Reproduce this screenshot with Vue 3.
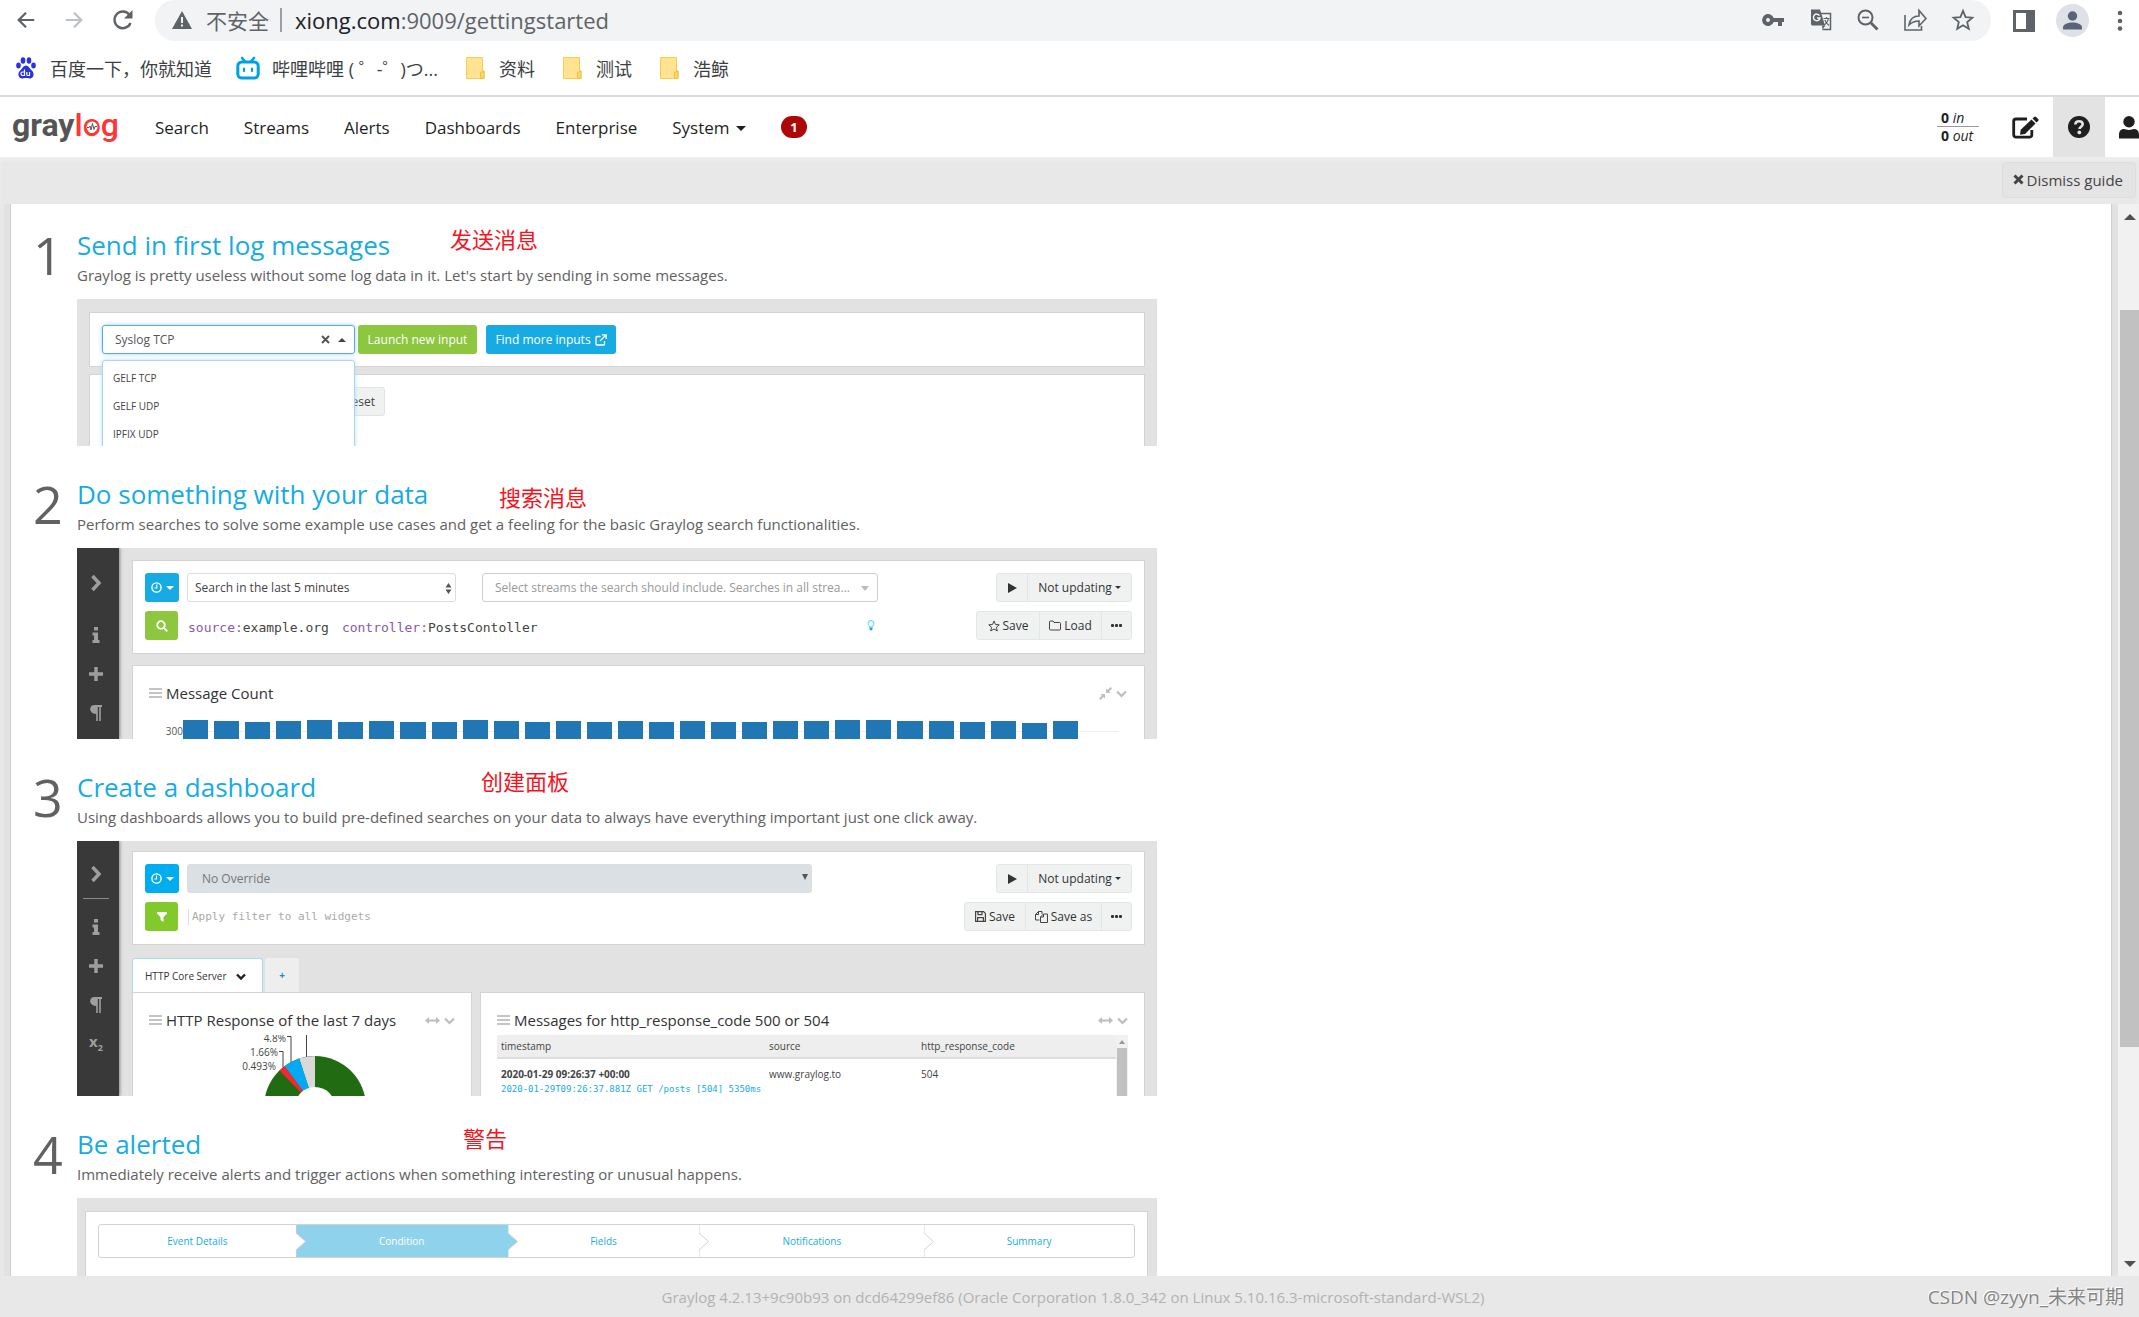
<script setup>
const bookmarks = [
  { kind: 'baidu', label: '百度一下，你就知道' },
  { kind: 'bili', label: '哔哩哔哩 ( ゜-゜)つ...' },
  { kind: 'folder', label: '资料' },
  { kind: 'folder', label: '测试' },
  { kind: 'folder', label: '浩鲸' },
]
const navItems = ['Search', 'Streams', 'Alerts', 'Dashboards', 'Enterprise']
const inputTypes = ['GELF TCP', 'GELF UDP', 'IPFIX UDP']
const bars = [19, 18, 17, 18, 19, 17, 18, 17, 17, 19, 18, 17, 18, 17, 18, 17, 18, 17, 17, 18, 18, 19, 19, 18, 18, 17, 18, 16, 18]
const steps = [
  { label: 'Event Details', grow: 197 },
  { label: 'Condition', grow: 212, active: true },
  { label: 'Fields', grow: 192 },
  { label: 'Notifications', grow: 225 },
  { label: 'Summary', grow: 210 },
]
</script>

<template>
  <div class="window">
    <header class="browser">
      <div class="toolbar">
        <div class="history">
          <button aria-label="Back"><svg width="22" height="22" viewBox="0 0 24 24"><path d="M21 12H4M12 4l-8 8 8 8" fill="none" stroke="#5f6368" stroke-width="2.4" /></svg></button>
          <button aria-label="Forward"><svg width="22" height="22" viewBox="0 0 24 24"><path d="M3 12h17M12 4l8 8-8 8" fill="none" stroke="#bdc1c6" stroke-width="2.4" /></svg></button>
          <button aria-label="Reload"><svg width="24" height="24" viewBox="0 0 24 24"><path d="M19.500 15A8.300 8.300 0 1 1 18.400 6.800" fill="none" stroke="#5f6368" stroke-width="2.4" /><path d="M21.500 2v8.500h-8.500z" fill="#5f6368" /></svg></button>
        </div>
        <div class="omnibox">
          <svg width="20" height="18" viewBox="0 0 20 18"><path d="M10 0l10 18H0z" fill="#5f6368" /><path d="M9 6h2v6H9zM9 13.500h2v2H9z" fill="#f1f3f4" /></svg>
          <span class="insecure">不安全</span>
          <span class="divider"></span>
          <span class="url"><b>xiong.com</b>:9009/gettingstarted</span>
          <div class="omni-icons">
            <svg width="24" height="24" viewBox="0 0 24 24" fill="#5f6368"><path d="M12.700 10a6 6 0 1 0 0 4H17v4h4v-4h2v-4zM7 14a2 2 0 1 1 0-4 2 2 0 0 1 0 4z" /></svg>
            <svg width="24" height="24" viewBox="0 0 24 24"><path d="M10 5.500h11.500v16H13.500" fill="none" stroke="#5f6368" stroke-width="1.500" /><path d="M2 1.500h9l5 16H3.500A1.500 1.500 0 0 1 2 16z" fill="#5f6368" /><path d="M10.500 7.600A3.300 3.300 0 1 0 11 10H8" fill="none" stroke="#f1f3f4" stroke-width="1.500" /><path d="M13 17.500l.5 4 3-4z" fill="#5f6368" /><path d="M14.500 10.500h6M17.500 9v1.500M19.500 10.500c-.5 3-2 5-4 6.500M15.800 12c.8 2 2.200 4 4.200 5.500" fill="none" stroke="#5f6368" stroke-width="1.200" /></svg>
            <svg width="22" height="22" viewBox="0 0 22 22" fill="none" stroke="#5f6368" stroke-width="2"><circle cx="8.500" cy="8.500" r="7" /><path d="M5 8.500h7" stroke-width="1.600" /><path d="M13.800 13.800l6.700 6.700" stroke-width="2.800" /></svg>
            <svg width="24" height="24" viewBox="0 0 24 24" fill="none" stroke="#5f6368" stroke-width="1.600"><path d="M2 7v15h16.500v-4" /><path d="M6 17c1-6 4-9 10-9V2.500l7 8-7 7.500v-5c-4 0-7 1-10 4z" /></svg>
            <svg width="24" height="24" viewBox="0 0 24 24" fill="none" stroke="#5f6368" stroke-width="1.800"><path d="M12 2.800l2.600 6.300 6.800.6-5.200 4.400 1.600 6.700-5.800-3.600-5.800 3.600 1.600-6.700-5.200-4.400 6.800-.6z" /></svg>
          </div>
        </div>
        <div class="window-icons">
          <svg width="22" height="22" viewBox="0 0 22 22"><path d="M0 0h22v22H0z" fill="#5f6368" /><path d="M3 3h10v16H3z" fill="#fff" /></svg>
          <svg width="33" height="33" viewBox="0 0 33 33"><circle cx="16.500" cy="16.500" r="16.500" fill="#dee1e6" /><circle cx="16.500" cy="12" r="4.700" fill="#5a6377" /><path d="M7 25.500v-2c0-3.500 5-5 9.500-5s9.500 1.500 9.500 5v2z" fill="#5a6377" /></svg>
          <svg width="6" height="22" viewBox="0 0 6 22" fill="#5f6368"><circle cx="3" cy="3" r="2.300" /><circle cx="3" cy="11" r="2.300" /><circle cx="3" cy="18.500" r="2.300" /></svg>
        </div>
      </div>
      <nav class="bookmarks" aria-label="Bookmarks">
        <a v-for="b in bookmarks" :key="b.label" href="#" :class="b.kind">
          <svg v-if="b.kind === 'baidu'" width="20" height="22" viewBox="0 0 20 22" fill="#2932e1"><ellipse cx="2.500" cy="8.500" rx="2.300" ry="3" /><ellipse cx="7" cy="3.500" rx="2.300" ry="3.200" /><ellipse cx="13" cy="3.500" rx="2.300" ry="3.200" /><ellipse cx="17.500" cy="8.500" rx="2.300" ry="3" /><path d="M10 8.500c2.500 0 3.500 3 6 5.200 3 2.800 1.500 8-2.500 7.800-1.500 0-2-.4-3.500-.4s-2 .4-3.500.4c-4 .2-5.500-5-2.500-7.800C6.500 11.500 7.500 8.500 10 8.500z" /><path d="M8.500 12.500v6H6.700a1.500 1.500 0 0 1 0-3.500h1.800M10.800 15v2.500q0 1 1 1h1.700V15" fill="none" stroke="#fff" stroke-width="1.200" /></svg>
          <svg v-else-if="b.kind === 'bili'" width="24" height="24" viewBox="0 0 24 24" fill="none" stroke="#00a1e4" stroke-width="3" stroke-linecap="round"><rect x="1.800" y="6" width="20.400" height="16" rx="4" /><path d="M6 2l3 3.500M18 2l-3 3.500" stroke-width="2.600" /><path d="M8 12.500v2.500M16 12.500v2.500" stroke-width="2.200" /></svg>
          <svg v-else width="19" height="22" viewBox="0 0 19 22"><path d="M.5 2.500V.5h16v13.500h1.500v7.500H.5z" fill="#ffe390" stroke="#f7cd50" /><path d="M14.500 21v-5.500l3.500-1.500v7.500z" fill="#fdd663" stroke="#f0c040" /></svg>
          <span>{{ b.label }}</span>
        </a>
      </nav>
    </header>

    <header class="navbar">
      <a class="logo" href="#" aria-label="graylog"><b>gray</b><span>l</span><span class="logo-o">o<svg width="12" height="12" viewBox="0 0 12 12"><circle cx="6" cy="6" r="5.500" fill="#fff" /><path d="M1 6.500h2l1-1.500 1 4L6.500 2.500 8 8.500l1-3h2" fill="none" stroke="#555" /></svg></span><span>g</span></a>
      <nav class="links">
        <a v-for="n in navItems" :key="n" href="#">{{ n }}</a>
        <a href="#">System <i class="caret"></i></a>
        <a class="badge" href="#">1</a>
      </nav>
      <div class="throughput"><div><b>0</b> <em>in</em></div><div><b>0</b> <em>out</em></div></div>
      <button class="nav-btn" aria-label="Scratchpad"><svg width="27" height="23" viewBox="0 0 27 23"><path d="M15 3H4a2.300 2.300 0 0 0-2.300 2.300v13.500A2.300 2.300 0 0 0 4 21.200h13.500a2.300 2.300 0 0 0 2.300-2.300v-5" fill="none" stroke="#1f1f1f" stroke-width="2.800" /><path d="M19.500 3.500l4 4L13 18l-5 .7.7-5zM20.500 2.500l1.600-1.600q1-1 2 0l2 2q1 1 0 2l-1.600 1.600z" fill="#1f1f1f" /></svg></button>
      <button class="nav-btn help" aria-label="Help"><svg width="22" height="22" viewBox="0 0 22 22"><circle cx="11" cy="11" r="11" fill="#1f1f1f" /><path d="M7.300 8.500C7.500 6.300 9 5.300 11 5.300c2.200 0 3.700 1.200 3.700 3 0 2.400-3.200 2.400-3.200 4.700" fill="none" stroke="#e3e3e3" stroke-width="2.600" /><circle cx="11.300" cy="16.400" r="1.900" fill="#e3e3e3" /></svg></button>
      <button class="nav-btn user" aria-label="User"><svg width="20" height="23" viewBox="0 0 20 23" fill="#1f1f1f"><circle cx="10" cy="5.700" r="5.700" /><path d="M0 22.500v-3.500c0-4 2-6 5-6 1.500 0 2.500.9 5 .9s3.500-.9 5-.9c3 0 5 2 5 6v3.500z" /></svg></button>
    </header>

    <div class="guide-bar"><button><svg width="11" height="11" viewBox="0 0 11 11"><path d="M1.500 1.500l8 8M9.500 1.500l-8 8" stroke="#444" stroke-width="3" /></svg>Dismiss guide</button></div>

    <div class="viewport">
      <main class="guide">
        <section>
          <div class="number">1</div>
          <div class="body">
            <h2>Send in first log messages</h2>
            <span class="note n1">发送消息</span>
            <p>Graylog is pretty useless without some log data in it. Let's start by sending in some messages.</p>
            <div class="shot shot1">
              <div class="panel inputs">
                <label class="combo"><input value="Syslog TCP" aria-label="Input type" /><svg width="9" height="9" viewBox="0 0 9 9"><path d="M1 1l7 7M8 1L1 8" stroke="#555" stroke-width="2" /></svg><i class="caret up"></i></label>
                <button class="btn green">Launch new input</button>
                <button class="btn blue more">Find more inputs <svg width="12" height="12" viewBox="0 0 12 12" fill="none" stroke="#fff" stroke-width="1.300"><path d="M5.500 2.500H2a1 1 0 0 0-1 1V10a1 1 0 0 0 1 1h6.500a1 1 0 0 0 1-1V7M7 .8h4.200V5M11 1L5 7" /></svg></button>
                <ul class="menu"><li v-for="t in inputTypes" :key="t">{{ t }}</li></ul>
              </div>
              <div class="panel filter"><button class="btn light">Reset</button></div>
            </div>
          </div>
        </section>

        <section>
          <div class="number">2</div>
          <div class="body">
            <h2>Do something with your data</h2>
            <span class="note n2">搜索消息</span>
            <p>Perform searches to solve some example use cases and get a feeling for the basic Graylog search functionalities.</p>
            <div class="shot shot2">
              <div class="side">
                <svg width="14" height="18" viewBox="0 0 14 18"><path d="M3.500 2l6.500 7-6.500 7" fill="none" stroke="#9e9e9e" stroke-width="3.500" /></svg>
                <hr />
                <svg width="14" height="16" viewBox="0 0 14 16" fill="#9e9e9e"><path d="M5 0h4v3.500H5zM3.500 5.500H9v7.500h1.500V16h-7v-3H5V8.500H3.500z" /></svg>
                <svg width="14" height="14" viewBox="0 0 14 14"><path d="M7 0v14M0 7h14" stroke="#9e9e9e" stroke-width="3.400" /></svg>
                <svg width="14" height="16" viewBox="0 0 14 16" fill="#9e9e9e"><path d="M5.500 0H13v2h-1.200v14h-1.600V2H8.800v14H7.200V9C-.5 9-.5 0 5.500 0z" /></svg>
              </div>
              <div class="work">
                <div class="panel search">
                  <div class="row">
                    <button class="btn blue time" aria-label="Time range"><svg width="11" height="11" viewBox="0 0 11 11" fill="none" stroke="#fff" stroke-width="1.400"><circle cx="5.500" cy="5.500" r="4.600" /><path d="M5.800 2.500V6H3.500" stroke-width="1.100" /></svg><i class="caret"></i></button>
                    <div class="select range"><select aria-label="Range"><option>Search in the last 5 minutes</option></select><svg width="7" height="11" viewBox="0 0 7 11" fill="#555"><path d="M3.500 0l3 4.500H.5zM3.500 11l3-4.500H.5z" /></svg></div>
                    <div class="select streams"><select aria-label="Streams"><option>Select streams the search should include. Searches in all strea...</option></select><i class="caret"></i></div>
                    <div class="group"><button class="play" aria-label="Play"><i></i></button><button class="upd">Not updating<i class="caret"></i></button></div>
                  </div>
                  <div class="row">
                    <button class="btn green sq" aria-label="Search"><svg width="12" height="12" viewBox="0 0 12 12" fill="none" stroke="#fff" stroke-width="1.800"><circle cx="5" cy="5" r="3.800" /><path d="M8 8l3.300 3.300" /></svg></button>
                    <code class="query"><span><i>source:</i>example.org</span><span><i>controller:</i>PostsContoller</span></code>
                    <div class="group">
                      <button class="w62"><svg width="12" height="12" viewBox="0 0 24 24" fill="none" stroke="#444" stroke-width="2"><path d="M12 2l3 7 7.500.6-5.700 4.900 1.800 7.400L12 18l-6.600 3.900 1.800-7.400L1.500 9.600 9 9z" /></svg>Save</button>
                      <button class="w62"><svg width="12" height="11" viewBox="0 0 12 11" fill="none" stroke="#444"><path d="M.5 9V2q0-1 1-1h2.500l1 1.500h5.500q1 0 1 1V9q0 1-1 1h-9q-1 0-1-1z" /></svg>Load</button>
                      <button class="dots" aria-label="More"><i></i><i></i><i></i></button>
                    </div>
                    <svg class="bulb" width="8" height="11" viewBox="0 0 8 11"><path d="M2.500 7C2.500 5.500 1 5 1 3.500a3 3 0 0 1 6 0C7 5 5.500 5.500 5.500 7z" fill="#eaf7fd" stroke="#6cc9ef" /><path d="M2.500 7.500h3v2L4 10.700 2.500 9.500z" fill="#16ace3" /></svg>
                  </div>
                </div>
                <div class="panel chart">
                  <div class="title"><i class="grip"></i><h3>Message Count</h3>
                    <svg width="13" height="13" viewBox="0 0 13 13" fill="#bdbdbd"><path d="M7 6V1.500l1.500 1.500L11.500 0 13 1.500 10 4.500 11.500 6zM6 7v4.500L4.500 10l-3 3L0 11.500l3-3L1.500 7z" /></svg>
                    <svg width="11" height="8" viewBox="0 0 11 8"><path d="M1 1.500l4.500 4.500L10 1.500" fill="none" stroke="#bdbdbd" stroke-width="2.200" /></svg>
                  </div>
                  <div class="plot"><span>300</span><div class="bars"><div v-for="(h, i) in bars" :key="i" :style="{ height: h + 'px' }"></div></div></div>
                </div>
              </div>
            </div>
          </div>
        </section>

        <section>
          <div class="number">3</div>
          <div class="body">
            <h2>Create a dashboard</h2>
            <span class="note n3">创建面板</span>
            <p>Using dashboards allows you to build pre-defined searches on your data to always have everything important just one click away.</p>
            <div class="shot shot3">
              <div class="side">
                <svg width="14" height="18" viewBox="0 0 14 18"><path d="M3.500 2l6.500 7-6.500 7" fill="none" stroke="#9e9e9e" stroke-width="3.500" /></svg>
                <hr />
                <svg width="14" height="16" viewBox="0 0 14 16" fill="#9e9e9e"><path d="M5 0h4v3.500H5zM3.500 5.500H9v7.500h1.500V16h-7v-3H5V8.500H3.500z" /></svg>
                <svg width="14" height="14" viewBox="0 0 14 14"><path d="M7 0v14M0 7h14" stroke="#9e9e9e" stroke-width="3.400" /></svg>
                <svg width="14" height="16" viewBox="0 0 14 16" fill="#9e9e9e"><path d="M5.500 0H13v2h-1.200v14h-1.600V2H8.800v14H7.200V9C-.5 9-.5 0 5.500 0z" /></svg>
                <b>x<sub>2</sub></b>
              </div>
              <div class="work">
                <div class="panel search">
                  <div class="row">
                    <button class="btn blue bright time" aria-label="Time range"><svg width="11" height="11" viewBox="0 0 11 11" fill="none" stroke="#fff" stroke-width="1.400"><circle cx="5.500" cy="5.500" r="4.600" /><path d="M5.500 2.500V6H3.500" stroke-width="1.100" /></svg><i class="caret"></i></button>
                    <div class="select override"><select aria-label="Override"><option>No Override</option></select><svg width="6" height="7" viewBox="0 0 6 7" fill="#555"><path d="M0 0h6L3 6z" /></svg></div>
                    <div class="group"><button class="play" aria-label="Play"><i></i></button><button class="upd">Not updating<i class="caret"></i></button></div>
                  </div>
                  <div class="row">
                    <button class="btn green lime sq" aria-label="Filter"><svg width="10" height="10" viewBox="0 0 10 10" fill="#fff"><path d="M0 0h10v1.500L6.500 5v5L3.500 8V5L0 1.500z" /></svg></button>
                    <input class="apply" placeholder="Apply filter to all widgets" aria-label="Filter" />
                    <div class="group">
                      <button class="w60"><svg width="11" height="11" viewBox="0 0 11 11" fill="none" stroke="#444" stroke-width="1.200"><path d="M.6.6h8l1.800 1.800v8H.6zM3 .6v3h4v-3M2.600 10.400V6.600h5.800v3.800" /></svg>Save</button>
                      <button class="w76"><svg width="13" height="12" viewBox="0 0 13 12" fill="none" stroke="#444"><path d="M4.500 9H.5V3.500l3-3H7V3M.5 3.500h3v-3M5.500 6l3-3h4v8.500h-7zM5.500 6h3V3" /></svg>Save as</button>
                      <button class="dots" aria-label="More"><i></i><i></i><i></i></button>
                    </div>
                  </div>
                </div>
                <div class="tabs">
                  <button class="tab">HTTP Core Server<svg width="10" height="8" viewBox="0 0 10 8"><path d="M1 1.500l4 4 4-4" fill="none" stroke="#222" stroke-width="2.400" /></svg></button>
                  <button class="add">+</button>
                </div>
                <div class="widgets">
                  <div class="panel pie-w">
                    <div class="title"><i class="grip"></i><h3>HTTP Response of the last 7 days</h3>
                      <svg width="15" height="7" viewBox="0 0 15 7" fill="#bdbdbd"><path d="M0 3.500L4 0v2.500h7V0l4 3.500L11 7V4.500H4V7z" /></svg>
                      <svg width="11" height="8" viewBox="0 0 11 8"><path d="M1 1.500l4.500 4.500L10 1.500" fill="none" stroke="#bdbdbd" stroke-width="2.200" /></svg>
                    </div>
                    <svg class="pie" width="140" height="61" viewBox="235 1034 140 61">
                      <circle cx="315" cy="1106" r="51" fill="#216b12" />
                      <path d="M315 1106V1055A51 51 0 0 0 299.200 1057.500z" fill="#d9d9d9" />
                      <path d="M315 1106L299.200 1057.500A51 51 0 0 0 284.500 1065.200z" fill="#03a9f4" />
                      <path d="M315 1106L284.500 1065.200A51 51 0 0 0 279.500 1069.500z" fill="#f9252f" />
                      <circle cx="315" cy="1106" r="20" fill="#fff" />
                      <path d="M287 1035.500h4v26M279 1050.500h4v16M306.500 1034v22" fill="none" stroke="#444" />
                      <g font-size="10" fill="#444" text-anchor="end"><text x="286" y="1041">4.8%</text><text x="278" y="1055">1.66%</text><text x="276" y="1069">0.493%</text></g>
                    </svg>
                  </div>
                  <div class="panel msg-w">
                    <div class="title"><i class="grip"></i><h3>Messages for http_response_code 500 or 504</h3>
                      <svg width="15" height="7" viewBox="0 0 15 7" fill="#bdbdbd"><path d="M0 3.500L4 0v2.500h7V0l4 3.500L11 7V4.500H4V7z" /></svg>
                      <svg width="11" height="8" viewBox="0 0 11 8"><path d="M1 1.500l4.500 4.500L10 1.500" fill="none" stroke="#bdbdbd" stroke-width="2.200" /></svg>
                    </div>
                    <div class="table-box">
                      <table>
                        <thead><tr><th>timestamp</th><th>source</th><th>http_response_code</th></tr></thead>
                        <tbody>
                          <tr><td><b>2020-01-29 09:26:37 +00:00</b></td><td>www.graylog.to</td><td>504</td></tr>
                          <tr class="raw"><td colspan="3">2020-01-29T09:26:37.881Z GET /posts [504] 5350ms</td></tr>
                        </tbody>
                      </table>
                      <div class="mini-scroll"><i class="caret up"></i><div></div></div>
                    </div>
                  </div>
                </div>
              </div>
            </div>
          </div>
        </section>

        <section>
          <div class="number">4</div>
          <div class="body">
            <h2>Be alerted</h2>
            <span class="note n4">警告</span>
            <p>Immediately receive alerts and trigger actions when something interesting or unusual happens.</p>
            <div class="shot shot4">
              <div class="panel">
                <ol class="wizard">
                  <li v-for="(s, i) in steps" :key="s.label" :class="{ active: s.active }" :style="{ flexGrow: s.grow }">
                    <svg v-if="i" class="notch" width="11" height="32" viewBox="0 0 11 32"><path d="M0 0V8L9.500 16.500 0 25v7" :fill="i === 2 ? '#8fd2ec' : '#fff'" stroke="#d3d3d3" /></svg>
                    <a href="#">{{ s.label }}</a>
                  </li>
                </ol>
              </div>
            </div>
          </div>
        </section>
      </main>
      <div class="scrollbar"><i class="caret up"></i><div class="thumb"></div><i class="caret"></i></div>
    </div>

    <footer>Graylog 4.2.13+9c90b93 on dcd64299ef86 (Oracle Corporation 1.8.0_342 on Linux 5.10.16.3-microsoft-standard-WSL2)
      <span class="watermark">CSDN @zyyn_未来可期</span>
    </footer>
  </div>
</template>

<style>
body { margin: 0; background: #e8e8e8; }
</style>

<style scoped>
* { box-sizing: border-box; }
.window { height: 100vh; display: flex; flex-direction: column; overflow: hidden; font-family: "Open Sans", "Noto Sans CJK SC", sans-serif; color: #1f1f1f; background: #e8e8e8; }
button, input, select { font: inherit; color: inherit; border: 0; background: none; padding: 0; margin: 0; outline: 0; }
svg { display: block; flex: none; }
a { color: inherit; text-decoration: none; }
h2, h3, p, ul, ol { margin: 0; padding: 0; font-weight: 400; list-style: none; }
.caret { display: inline-block; border: 4px solid transparent; border-top: 4px solid currentColor; border-bottom: 0; }
.caret.up { border-bottom: 4px solid currentColor; border-top: 0; }

/* browser frame */
.browser { flex: none; background: #fff; border-bottom: 2px solid #dadce0; }
.toolbar { display: flex; height: 41px; align-items: center; }
.history { display: flex; gap: 26px; padding: 0 0 2px 15px; width: 155px; align-items: center; }
.omnibox { flex: 1; height: 41px; display: flex; align-items: center; padding: 0 16px 2px 17px; background: #f1f3f4; border-radius: 20px; font-size: 21px; color: #5f6368; }
.insecure { margin-left: 14px; }
.divider { width: 2px; height: 24px; background: #9aa0a6; margin: 0 13px 0 11px; }
.url { font-size: 22px; }
.url b { font-weight: 400; color: #202124; }
.omni-icons { margin-left: auto; display: flex; gap: 24px; align-items: center; }
.window-icons { display: flex; width: 148px; padding: 0 16px 0 22px; align-items: center; gap: 21px; }
.window-icons svg:last-child { margin-left: auto; }
.bookmarks { height: 54px; display: flex; align-items: center; padding: 0 16px; gap: 28px; font-size: 18px; color: #3c4043; }
.bookmarks a { display: flex; align-items: center; gap: 14px; white-space: nowrap; }
.bookmarks .bili { gap: 12px; margin-left: -4px; }

/* application bar */
.navbar { flex: none; height: 60px; display: flex; align-items: center; background: #fff; }
.logo { width: 119px; margin: 0 24px 4px 12px; flex: none; font: 500 32px/40px Roboto, sans-serif; color: #ff3633; display: flex; }
.logo b { font-weight: 700; color: #555; }
.logo-o { position: relative; }
.logo-o svg { position: absolute; left: 3px; top: 16px; }
.links { display: flex; align-items: center; gap: 35px; font-size: 17px; }
.links .caret { margin: 0 0 3px 2px; border-width: 5px 5px 0; }
.links .badge { width: 26px; height: 22px; border-radius: 11px; background: #ad0707; color: #fff; font-size: 13px; font-weight: 700; line-height: 22px; text-align: center; }
.throughput { margin: 0 20px 0 auto; width: 42px; font-size: 14px; line-height: 17px; padding-bottom: 2px; }
.throughput div { padding-left: 4px; white-space: nowrap; }
.throughput div + div { border-top: 1px solid #999; }
.nav-btn { width: 54px; height: 60px; padding-right: 2px; display: flex; align-items: center; justify-content: center; flex: none; }
.help { width: 52px; padding: 0; background: #e3e3e3; }
.user { width: 34px; padding: 0; justify-content: flex-end; }
.guide-bar { flex: none; height: 47px; display: flex; justify-content: flex-end; align-items: center; padding: 0 3px 2px 0; box-shadow: inset 0 4px 3px #ededed; }
.guide-bar button { display: flex; align-items: center; gap: 3px; height: 36px; padding: 0 12px 0 10px; border: 1px solid #dedede; border-radius: 4px; background: #e4e4e4; font-size: 15px; color: #444; }

.viewport { flex: 1; min-height: 0; display: flex; background: #e2e2e2; border-left: 4px solid #e8e8e8; padding-left: 6px; }
.guide { flex: 1; overflow: hidden; background: #fff; border: 1px solid #cfcfcf; border-width: 0 1px; padding: 23px 0 0 22px; color: #616161; }
.scrollbar { width: 21px; margin-left: 6px; background: #f1f1f1; display: flex; flex-direction: column; align-items: center; padding: 10px 0 9px 2px; color: #505050; }
.scrollbar .caret { border-width: 0 6px 6px; flex: none; }
.scrollbar .caret:last-child { border-width: 6px 6px 0; }
.thumb { width: 19px; margin: 90px 0 auto; height: 70%; background: #c1c1c1; }

section { display: flex; margin-bottom: 30px; }
.number { width: 44px; font-size: 52px; line-height: 56px; }
.body { position: relative; width: 1080px; }
h2 { font-size: 26px; line-height: 36px; color: #16ace3; }
p { font-size: 15px; line-height: 24px; margin-bottom: 12px; }
.note { position: absolute; top: -1px; font-size: 22px; line-height: 26px; color: #f5141e; }
.n1 { left: 373px; }
.n2 { left: 422px; top: 8px; }
.n3 { left: 404px; }
.n4 { left: 386px; }

.shot { background: #e2e2e2; overflow: hidden; font-size: 12px; color: #444; }
.panel { background: #fff; border: 1px solid #d3d3d3; }
.btn { height: 29px; border-radius: 3px; display: flex; align-items: center; justify-content: center; gap: 4px; color: #fff; flex: none; font-size: 12px; }
.green { background: #8dc63f; width: 119px; }
.blue { background: #16ace3; }
.bright { background: #00aeef; }
.lime { background: #82c92b; }
.sq { width: 33px; }
.time { width: 34px; }
.light { background: #f0f2f2; border: 1px solid #e2e4e4; color: #444; width: 55px; justify-content: flex-end; padding-right: 9px; }

.shot1 { height: 147px; padding: 13px 12px 0; }
.inputs { position: relative; display: flex; align-items: flex-start; height: 55px; padding: 12px 12px 0; }
.combo { width: 253px; height: 29px; display: flex; align-items: center; border: 1px solid #5aa9e6; border-radius: 3px; box-shadow: 0 0 4px #9fd0f5; padding: 0 8px 0 12px; margin-right: 3px; gap: 8px; }
.combo input { flex: 1; min-width: 0; color: #555; }
.more { width: 130px; margin-left: 9px; }
.menu { position: absolute; left: 12px; top: 47px; width: 253px; height: 120px; padding: 3px 10px; background: #fff; border: 1px solid #a8d4f5; border-radius: 3px; box-shadow: 0 0 4px #b9ddf7; font-size: 10px; line-height: 28px; z-index: 1; }
.filter { margin-top: 7px; height: 90px; padding: 12px 0 0 240px; }

.shot2 { height: 191px; display: flex; }
.shot3 { height: 255px; display: flex; }
.side { width: 42px; flex: none; background: #393939; box-shadow: 1px 0 3px #888; display: flex; flex-direction: column; align-items: center; padding: 26px 4px 0 0; font-size: 15px; color: #9e9e9e; }
.side hr { width: 26px; height: 1px; border: 0; background: #8a8a8a; margin: 15px 0 20px; }
.side svg { margin-bottom: 24px; }
.side svg:first-child { margin-bottom: 0; }
.side svg:nth-child(5) { margin-bottom: 18px; }
.side b { line-height: 20px; }
.side sub { font-size: 9px; }
.shot3 .side { padding-top: 24px; }
.work { flex: 1; min-width: 0; padding: 12px 12px 0 13px; }
.search { position: relative; height: 94px; padding: 12px; }
.shot3 .work { padding-top: 10px; }
.row { display: flex; align-items: center; height: 29px; margin-bottom: 9px; }
.select { position: relative; height: 29px; border: 1px solid #d9dee2; border-radius: 3px; margin-left: 8px; }
.select select { appearance: none; width: 100%; height: 27px; padding: 0 7px; }
.select svg, .select .caret { position: absolute; right: 3px; top: 9px; }
.range { width: 269px; }
.streams { width: 396px; margin-left: 26px; border-color: #ccc; color: #999; }
.streams select { padding: 0 12px; }
.streams .caret { right: 8px; top: 12px; color: #bbb; border-width: 5px 4px 0; }
.override { width: 625px; background: #dbe0e4; color: #777; }
.override select { padding-left: 14px; }
.group { display: flex; margin-left: auto; height: 29px; background: #f0f2f2; border: 1px solid #e4e6e6; border-radius: 3px; }
.group button { display: flex; align-items: center; justify-content: center; gap: 3px; font-size: 12px; color: #333; }
.group button + button { border-left: 1px solid #e4e6e6; }
.play { width: 30px; }
.play i { border: 5px solid transparent; border-left: 9px solid #333; border-right: 0; }
.upd { width: 104px; }
.group .caret { border-width: 3px 3px 0; }
.w62 { width: 62px; }
.w60 { width: 60px; }
.w76 { width: 76px; }
.group .dots { width: 30px; gap: 1px; }
.dots i { width: 3px; height: 3px; border-radius: 1px; background: #333; }
.query { font: 13px/29px "DejaVu Sans Mono", monospace; display: flex; gap: 13px; margin-left: 10px; padding-top: 4px; color: #444; }
.query i { font-style: normal; color: #8959a8; }
.bulb { position: absolute; left: 734px; }
.apply { margin-left: 10px; width: 300px; height: 16px; border-left: 1px solid #ddd; padding-left: 3px; font: 11px/16px "DejaVu Sans Mono", monospace; }
.apply::placeholder { color: #aaa; opacity: 1; }
.chart { margin-top: 11px; height: 100px; padding: 16px 17px 0 16px; }
.title { display: flex; align-items: center; height: 23px; gap: 4px; }
.title h3 { margin-right: auto; font-size: 15px; line-height: 23px; color: #333; white-space: nowrap; }
.grip { width: 13px; height: 11px; background: repeating-linear-gradient(#c4c4c4 0 2px, #fff 2px 4px); flex: none; }
.plot { display: flex; margin-top: 15px; font-size: 10px; line-height: 23px; color: #555; }
.plot span { width: 34px; text-align: right; }
.bars { flex: 1; display: flex; align-items: flex-end; gap: 6px; height: 19px; margin-bottom: 20px; padding-right: 49px; background: linear-gradient(#eee, #eee) 0 11px / 936px 1px no-repeat; }
.bars div { flex: 1; background: #2077b4; }
.tabs { display: flex; margin-top: 13px; height: 34px; gap: 2px; }
.tab { width: 131px; background: #fff; border: 1px solid #a5dcee; border-bottom: 0; border-radius: 3px 3px 0 0; display: flex; align-items: center; padding: 0 12px; gap: 9px; font-size: 10px; color: #333; white-space: nowrap; }
.tab svg { margin-top: 2px; }
.add { width: 34px; background: #eee; border-radius: 3px 3px 0 0; color: #1a8fc0; font-size: 10px; font-weight: 700; }
.widgets { display: flex; gap: 8px; }
.widgets .panel { height: 120px; padding: 16px 16px 0; }
.pie-w { width: 340px; }
.pie { margin: 3px 0 0 86px; }
.widgets .msg-w { flex: 1; }
.table-box { display: flex; align-items: flex-start; margin-top: 3px; }
table { flex: 1; border-collapse: collapse; font-size: 10px; line-height: 14px; table-layout: fixed; color: #444; }
th, td { font-weight: 400; text-align: left; padding: 0 4px; }
th { background: #eee; border-bottom: 2px solid #ddd; height: 23px; }
th:nth-child(1) { width: 268px; }
th:nth-child(2) { width: 152px; }
td { padding-top: 8px; }
.raw td { font: 9px/12px "DejaVu Sans Mono", monospace; padding-top: 2px; color: #16ace3; }
.mini-scroll { width: 12px; background: #f1f1f1; display: flex; flex-direction: column; align-items: center; padding-top: 5px; color: #999; }
.mini-scroll .caret { border-width: 0 3px 4px; }
.mini-scroll div { width: 10px; height: 80px; margin-top: 4px; background: #c1c1c1; }
.shot4 { height: 200px; padding: 13px 9px 0 8px; }
.shot4 .panel { height: 200px; padding: 12px; }
.wizard { display: flex; height: 34px; border: 1px solid #d3d3d3; border-radius: 3px; font-size: 10px; color: #16ace3; }
.wizard li { flex: 1 1 0; position: relative; display: flex; align-items: center; justify-content: center; }
.wizard .active { background: #8fd2ec; color: #fff; }
.notch { position: absolute; left: 0; top: 0; }

footer { position: relative; flex: none; height: 41px; padding-left: 7px; text-align: center; font-size: 15px; line-height: 43px; color: #b2b2b2; }
.watermark { position: absolute; right: 15px; top: 0; font-size: 19px; line-height: 43px; color: #858585; text-shadow: -1px -1px 0 #fff; }
</style>
